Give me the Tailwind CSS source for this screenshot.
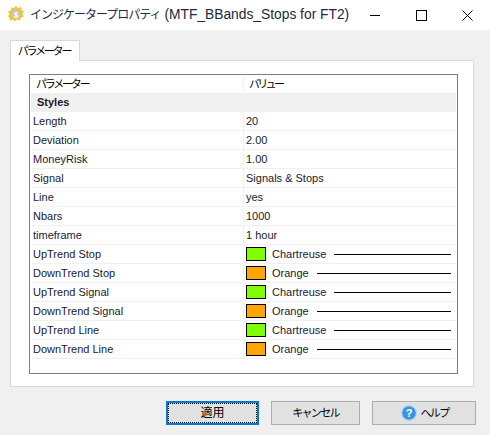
<!DOCTYPE html>
<html><head><meta charset="utf-8"><script src="https://cdn.jsdelivr.net/npm/@tailwindcss/browser@4"></script></head>
<body class="m-0 bg-[#f0f0f0] font-['Liberation_Sans','Noto_Sans_CJK_JP',sans-serif]">
<div class="w-[490px] h-[435px] overflow-hidden flex flex-col text-black">
  <header class="h-[30px] bg-white flex items-center shrink-0 relative">
    <svg class="ml-[7px] w-[18px] h-[18px] -mt-[3px]" viewBox="0 0 18 18"><path d="M9 1l2 2 3-1 .5 3 2.500 1.500-1.500 2.500 1.500 2.500-3 1-1 3-3-1-2 2-2-2-3 1-.5-3L1 11.500 2.500 9 1 6.500l3-1L4.500 2.500l2.500.5z" fill="#f2c531"/><circle cx="9" cy="9" r="5" fill="#c9c4ad"/><text x="9" y="12.500" font-size="9" text-anchor="middle" fill="#fff" font-weight="700">$</text></svg>
    <span class="ml-[5px] text-[13.800px] text-[#1a2a44] whitespace-nowrap"><span class="text-[12px] tracking-[-1px]">インジケータープロパティ</span> (MTF_BBands_Stops for FT2)</span>
    <div class="absolute right-0 top-0 h-[30px] flex">
      <div class="w-[46px] flex items-center justify-center"><div class="w-[10px] h-px bg-black"></div></div>
      <div class="w-[46px] flex items-center justify-center"><div class="w-[11px] h-[11px] border border-black"></div></div>
      <div class="w-[46px] flex items-center justify-center"><svg class="w-[11px] h-[11px]" viewBox="0 0 11 11"><path d="M.5.500l10 10M10.500.500l-10 10" stroke="#000" fill="none"/></svg></div>
    </div>
  </header>
  <main class="flex-1 px-[10px] pt-[10px]">
    <div class="relative z-10 w-[70px] h-[21px] bg-white border border-b-0 border-[#d9d9d9] text-[11px] tracking-[-2.200px] flex items-center justify-center pr-[2px]">パラメーター</div>
    <section class="w-[464px] h-[327px] -mt-px bg-white border border-[#d9d9d9] pt-[13px] pl-[18px]">
      <div class="w-[429px] h-[300px] border border-[#7f7f7f] bg-white px-px text-[11px] text-[#1a1a2e]">
        <div class="h-[18px] grid grid-cols-[213px_1fr] items-center text-black text-[11px] tracking-[-2.200px]">
          <div class="pl-[5px] h-full flex items-center border-r border-[#f0f0f0]">パラメーター</div><div class="pl-[5px] tracking-[-2.700px]">バリュー</div>
        </div>
        <div class="h-[19px] bg-[#f0f0f0] pl-[6px] flex items-center font-bold">Styles</div>
        <div class="grid grid-cols-[213px_1fr] auto-rows-[19px] items-stretch">
          <div class="pl-[2px] flex items-center border-b border-r border-[#f0f0f0]">Length</div><div class="pl-[2px] flex items-center border-b border-[#f0f0f0]">20</div>
          <div class="pl-[2px] flex items-center border-b border-r border-[#f0f0f0]">Deviation</div><div class="pl-[2px] flex items-center border-b border-[#f0f0f0]">2.00</div>
          <div class="pl-[2px] flex items-center border-b border-r border-[#f0f0f0]">MoneyRisk</div><div class="pl-[2px] flex items-center border-b border-[#f0f0f0]">1.00</div>
          <div class="pl-[2px] flex items-center border-b border-r border-[#f0f0f0]">Signal</div><div class="pl-[2px] flex items-center border-b border-[#f0f0f0]">Signals &amp; Stops</div>
          <div class="pl-[2px] flex items-center border-b border-r border-[#f0f0f0]">Line</div><div class="pl-[2px] flex items-center border-b border-[#f0f0f0]">yes</div>
          <div class="pl-[2px] flex items-center border-b border-r border-[#f0f0f0]">Nbars</div><div class="pl-[2px] flex items-center border-b border-[#f0f0f0]">1000</div>
          <div class="pl-[2px] flex items-center border-b border-r border-[#f0f0f0]">timeframe</div><div class="pl-[2px] flex items-center border-b border-[#f0f0f0]">1 hour</div>

          <div class="pl-[2px] flex items-center border-b border-r border-[#f0f0f0]">UpTrend Stop</div>
          <div class="pl-[2px] pr-[5px] flex items-center border-b border-[#f0f0f0]"><span class="w-[20px] h-[14px] border border-black bg-[#7fff00] shrink-0"></span><span class="ml-[6px]">Chartreuse</span><span class="ml-[8px] flex-1 h-px bg-black"></span></div>
          <div class="pl-[2px] flex items-center border-b border-r border-[#f0f0f0]">DownTrend Stop</div>
          <div class="pl-[2px] pr-[5px] flex items-center border-b border-[#f0f0f0]"><span class="w-[20px] h-[14px] border border-black bg-[#ffa500] shrink-0"></span><span class="ml-[6px]">Orange</span><span class="ml-[8px] flex-1 h-px bg-black"></span></div>
          <div class="pl-[2px] flex items-center border-b border-r border-[#f0f0f0]">UpTrend Signal</div>
          <div class="pl-[2px] pr-[5px] flex items-center border-b border-[#f0f0f0]"><span class="w-[20px] h-[14px] border border-black bg-[#7fff00] shrink-0"></span><span class="ml-[6px]">Chartreuse</span><span class="ml-[8px] flex-1 h-px bg-black"></span></div>
          <div class="pl-[2px] flex items-center border-b border-r border-[#f0f0f0]">DownTrend Signal</div>
          <div class="pl-[2px] pr-[5px] flex items-center border-b border-[#f0f0f0]"><span class="w-[20px] h-[14px] border border-black bg-[#ffa500] shrink-0"></span><span class="ml-[6px]">Orange</span><span class="ml-[8px] flex-1 h-px bg-black"></span></div>
          <div class="pl-[2px] flex items-center border-b border-r border-[#f0f0f0]">UpTrend Line</div>
          <div class="pl-[2px] pr-[5px] flex items-center border-b border-[#f0f0f0]"><span class="w-[20px] h-[14px] border border-black bg-[#7fff00] shrink-0"></span><span class="ml-[6px]">Chartreuse</span><span class="ml-[8px] flex-1 h-px bg-black"></span></div>
          <div class="pl-[2px] flex items-center border-b border-r border-[#f0f0f0]">DownTrend Line</div>
          <div class="pl-[2px] pr-[5px] flex items-center border-b border-[#f0f0f0]"><span class="w-[20px] h-[14px] border border-black bg-[#ffa500] shrink-0"></span><span class="ml-[6px]">Orange</span><span class="ml-[8px] flex-1 h-px bg-black"></span></div>
        </div>
      </div>
    </section>
    <footer class="flex mt-[14px] ml-[156px] h-[24px] text-[11px] tracking-[-1.700px]">
      <button class="w-[93px] h-full bg-[#e1e1e1] border-2 border-[#0078d7] flex items-center justify-center p-0"><span class="w-[89px] h-[20px] border border-dotted border-black flex items-center justify-center text-[12px] tracking-normal">適用</span></button>
      <button class="ml-[12px] w-[89px] h-full bg-[#e1e1e1] border border-[#adadad] flex items-center justify-center">キャンセル</button>
      <button class="ml-[12px] w-[104px] h-full bg-[#e1e1e1] border border-[#adadad] flex items-center justify-center">
        <svg class="w-[18px] h-[18px] mr-[3px]" viewBox="0 0 18 18"><circle cx="9" cy="9" r="8.500" fill="#bcdcf4"/><circle cx="9" cy="9" r="6.800" fill="#3f93dc"/><text x="9" y="13" font-size="11" font-weight="700" fill="#fff" text-anchor="middle" letter-spacing="0">?</text></svg>ヘルプ</button>
    </footer>
  </main>
</div>
</body></html>
